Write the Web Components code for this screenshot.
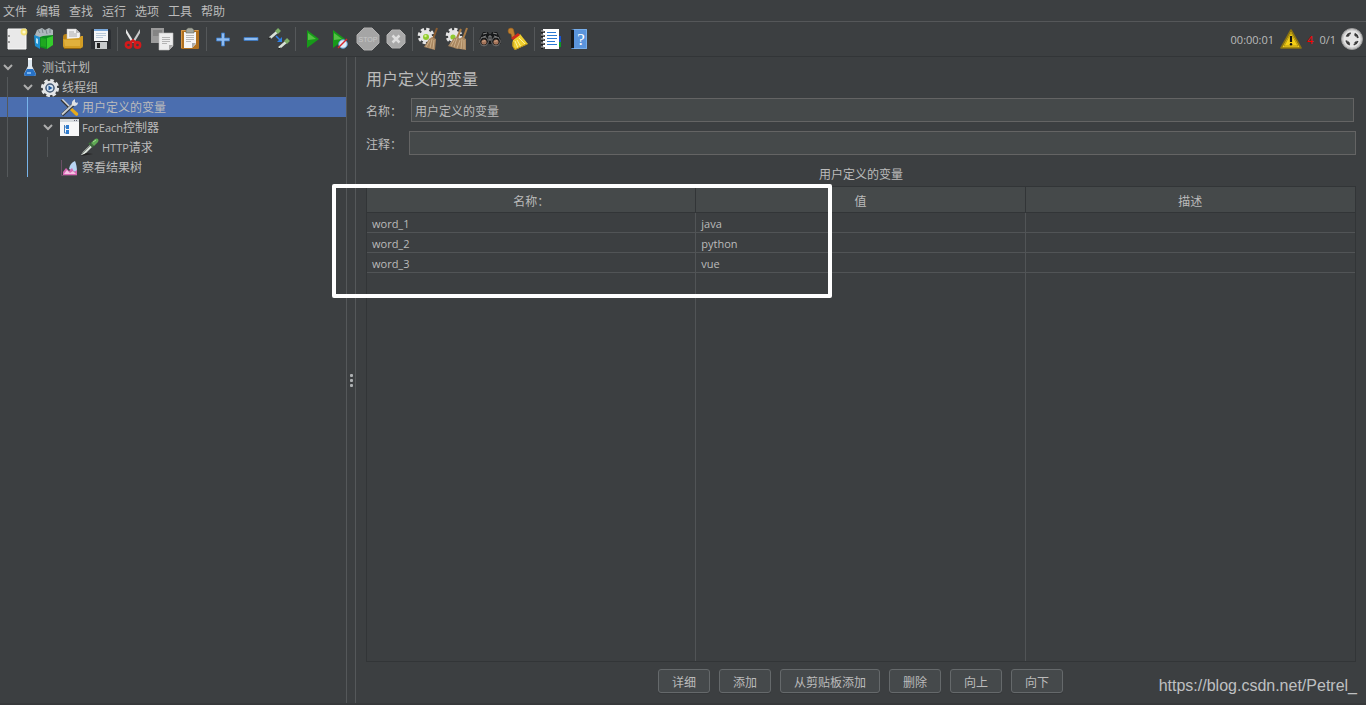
<!DOCTYPE html>
<html lang="zh-CN">
<head>
<meta charset="utf-8">
<title>Apache JMeter</title>
<style>
:root{
  --bg:#3c3f41; --field:#45494a; --text:#bbbbbb; --edge:#646464; --line:#515456; --dark:#323537; --sel:#4b6eaf;
}
body{margin:0;background:var(--bg);color:var(--text);font:12px/16px "Open Sans","Noto Sans CJK SC",sans-serif}
</style>
</head>
<body>
<jm-app></jm-app>

<script>
const ICONS = {
new:`<path d="M3 2h18v20H3z" fill="#e9e9e9" stroke="#fafafa"/><path d="M4 8v2M4 14v2" stroke="#999" stroke-width="2"/><circle cx="19" cy="5" r="3.4" fill="#f5df62" opacity=".85"/><circle cx="19" cy="5" r="1.6" fill="#fffbd0"/>`,
templates:`<path d="M2 8l2-5 5-2 3 2 4-2 4 2v9H4z" fill="#aeb7bb"/><path d="M5 3l2 3M9 2l1 4M13 3l1 4M17 2v4" stroke="#7b868a"/><path d="M1 8l6 2v12l-5-3z" fill="#1d8fcf"/><path d="M3 11l2 1v5l-2-1z" fill="#b5e2f8"/><path d="M7 10l3-1 10-1 0 10-7 4-6-2z" fill="#0c8a1c"/><path d="M7 10l7 1v11l-7-2z" fill="#139020"/><path d="M8 11l5 1v8l-5-1z" fill="#1fa81f"/><path d="M14 11l6-2v9l-6 4z" fill="#35cc2c"/>`,
open:`<path d="M2 10q0-3 3-3h3v5H2z" fill="#b98215"/><path d="M6 2h9l4 4v9H6z" fill="#f1f1f1" stroke="#bbb" stroke-width=".5"/><path d="M15 2v4h4" fill="#bbb"/><path d="M8 5h5M8 7h8M8 9h8" stroke="#aaa"/><path d="M3 12l15-1 2-2h2v10q0 2-2 2H4q-2 0-2-2v-7z" fill="#d39d24"/><path d="M3 13h16v6H4z" fill="#efc75c" opacity=".45"/><path d="M3 21.500h17" stroke="#8f620f"/>`,
save:`<path d="M3 2h18l1 2v18H2V3z" fill="#2c2f33"/><path d="M5 2h14v12H5z" fill="#f4f6f8"/><path d="M5 2h14v2H5z" fill="#7aa8da"/><path d="M7 6.500h10M7 8.500h10M7 10.500h7" stroke="#b9cada"/><path d="M6 15h12v7H6z" fill="#c7cacc"/><path d="M8 16h3v5H8z" fill="#222"/>`,
cut:`<path d="M4 2l8 13-2 1L4 6z" fill="#e7e7e7"/><path d="M18 2l-8 13 2 1 6-10z" fill="#c9c9c9"/><g fill="none" stroke="#d3191b" stroke-width="2.600"><ellipse cx="6.500" cy="18" rx="2.600" ry="2.600"/><ellipse cx="15.500" cy="18" rx="2.600" ry="2.600"/><path d="M8 16l3-2.500 3 2.500"/></g>`,
copy:`<path d="M1 1h13v15H1z" fill="#9b9b9b"/><path d="M3 4h9M3 6h9M3 8h6" stroke="#6e6e6e"/><path d="M9 6h14v13l-4 4H9z" fill="#ededed" stroke="#bdbdbd" stroke-width=".6"/><path d="M23 18h-4v5z" fill="#a9a9a9"/><path d="M12 10.500h8M12 12.500h8M12 14.500h8M12 16.500h5" stroke="#b4b4b4"/>`,
paste:`<rect x="3" y="3" width="18" height="19" rx="1" fill="#b1701d"/><path d="M3.500 21V3.500H20.500" fill="none" stroke="#d7994a"/><path d="M6 5h12v12l-4 4H6z" fill="#f5f5f5"/><path d="M18 16h-4v5z" fill="#aaa"/><path d="M8 8.500h8M8 10.500h8M8 12.500h8M8 14.500h5" stroke="#b8b8b8"/><path d="M8 3l2-2h4l2 2v3H8z" fill="#a3a69c" stroke="#62655d" stroke-width=".6"/>`,
plus:`<path d="M10.500 6h3v5h5v3h-5v5h-3v-5h-5v-3h5z" fill="#8fbcf0" stroke="#3a78c4" stroke-width=".8"/>`,
minus:`<path d="M5 10.500h14v3H5z" fill="#8fbcf0" stroke="#3a78c4" stroke-width=".8"/>`,
toggle:`<path d="M3 11l7-6" stroke="#d9e2d9" stroke-width="2.600"/><path d="M9.500 5.500l3-3" stroke="#7db067" stroke-width="4"/><path d="M12 21l7-6" stroke="#d9e2d9" stroke-width="2.600"/><path d="M18.500 15.500l3-3" stroke="#7db067" stroke-width="4"/><path d="M9 9l4 4" stroke="#2f7fe6" stroke-width="1.600"/><path d="M15 10v5h-5z" fill="#2f7fe6"/><path d="M1 12l3-1M11 22l3-1" stroke="#222"/>`,
play:`<path d="M7 3l12 9-12 9z" fill="#179a19"/><path d="M8 6l8 6-8 1z" fill="#54c044"/>`,
playno:`<path d="M5 3l12 9-12 9z" fill="#179a19"/><path d="M6 6l8 6-8 1z" fill="#54c044"/><circle cx="15" cy="17" r="4.300" fill="#dcecf8" stroke="#5c9acb"/><path d="M10 21l9-9" stroke="#d6262b" stroke-width="1.500"/>`,
stop:`<path d="M8 1h8l7 7v8l-7 7H8l-7-7V8z" fill="#a5a5a5" stroke="#b0b0b0"/><text x="12" y="15" text-anchor="middle" font-family="Liberation Sans" font-size="7" fill="#c8c8c8">STOP</text>`,
shutdown:`<path d="M8 3h8l5 5v8l-5 5H8l-5-5V8z" fill="#a9a9a9" stroke="#b3b3b3"/><path d="M8.500 8.500l7 7M15.500 8.500l-7 7" stroke="#dedede" stroke-width="2.500"/>`,
clear:`<circle cx="9" cy="9" r="6" fill="#e6e6e6"/><circle cx="9" cy="9" r="6.800" fill="none" stroke="#e6e6e6" stroke-width="3" stroke-dasharray="3.200 2.140"/><circle cx="9" cy="10" r="3" fill="#8fca2e"/><circle cx="8.500" cy="9" r="1.200" fill="#d4f08a"/><path d="M20 1l-4 11" stroke="#8b5d31" stroke-width="2"/><path d="M12 12l3-2 4 2-1 11-11-3z" fill="#a88660"/><path d="M13 13l-4 7M15 12l-2 9M17 13l-1 9" stroke="#cdb08a"/>`,
clearall:`<circle cx="9" cy="9" r="6" fill="#e6e6e6"/><circle cx="9" cy="9" r="6.800" fill="none" stroke="#e6e6e6" stroke-width="3" stroke-dasharray="3.200 2.140"/><circle cx="8" cy="10" r="2.600" fill="#8fca2e"/><path d="M16 2l-4 9M22 1l-4 11" stroke="#a87a45" stroke-width="2"/><path d="M9 11l4-1 2 2-2 10-10-3z" fill="#a88660"/><path d="M14 12l3-2 4 2v11l-12-2z" fill="#ab8962"/><path d="M10 12l-4 7M12 11l-3 9M15 13l-3 8M17 12l-1 10M19 13v9" stroke="#cdb08a"/>`,
search:`<path d="M5 5l5 0 1 2h2l1-2 5 0 4 8v4H1v-4z" fill="#17191a"/><path d="M5 7l4-1M19 7l-4-1M3 11l5-2M21 11l-5-2M11 9h2v4h-2z" fill="none" stroke="#8b8b8b"/><circle cx="6" cy="14.500" r="4.300" fill="#17191a" stroke="#777"/><circle cx="18" cy="14.500" r="4.300" fill="#17191a" stroke="#777"/><circle cx="6" cy="15" r="2.600" fill="#a3745a"/><circle cx="18" cy="15" r="2.600" fill="#a3745a"/><path d="M4.500 15q1-2 3-1M16.500 15q1-2 3-1" fill="none" stroke="#dcae8e"/>`,
broom:`<path d="M2 4q0-3 3-3t3 4l1 4-3 2-1-4q-3 0-3-3z" fill="#c08132" stroke="#8f5b1c" stroke-width=".6"/><path d="M7 13q-2 6 2 10l13-6-8-10z" fill="#efcf2f"/><path d="M5 11l7-5 2 2-7 5z" fill="#cf2b1c"/><path d="M9 14l3 7M11 13l4 7M13 11l6 6" stroke="#fff19a"/><path d="M7 15q-1 5 2 7.500l12-5.500" fill="none" stroke="#b88e13"/>`,
list:`<path d="M18 9h4v6h-4z" fill="#1753cf"/><path d="M18 15h4v5h-4z" fill="#0b9a27"/><path d="M4 2h16v20H4z" fill="#fff"/><path d="M8 5.500h9M8 8.500h10M8 11.500h10M8 14.500h8M8 17.500h10" stroke="#2a78d2"/><path d="M2 5h4M2 9h4M2 13h4M2 17h4M2 21h4" stroke="#111" stroke-width="1.500"/><path d="M2 4h3M2 8h3M2 12h3M2 16h3M2 20h3" stroke="#bbb"/>`,
help:`<path d="M4 3l3-1h13v20H5l-1-1z" fill="#5a94dc"/><path d="M4 3h3v18H4z" fill="#17191b"/><path d="M7 2.500h12.500v19H7" fill="none" stroke="#78aeea"/><text x="14" y="18" text-anchor="middle" font-family="Liberation Serif" font-size="17" fill="#fff">?</text>`,
warn:`<path d="M12 3L22 21H2z" fill="#f5cf16" stroke="#8c7411" stroke-width="1.600" stroke-linejoin="round"/><path d="M12 6L19 19H5z" fill="none" stroke="#8c7411" stroke-width=".6"/><path d="M12 9v6" stroke="#111" stroke-width="2.200"/><circle cx="12" cy="17.300" r="1.200" fill="#111"/>`,
threads:`<circle cx="12" cy="12" r="10.500" fill="#c9c9c9" stroke="#9a9a9a"/><circle cx="12" cy="12" r="8.500" fill="#e6e6e6"/><circle cx="12" cy="12" r="6" fill="none" stroke="#3a3a3a" stroke-width="1.800" stroke-dasharray="5.400 4.025" stroke-dashoffset="-2"/><path d="M7 7l3 1-2 2zM17 7l-1 3-2-2zM17 17l-3-1 2-2zM7 17l1-3 2 2z" fill="#3a3a3a"/>`,
flask:`<path d="M8 2h4v7l4 8q0 2-2 2H6q-2 0-2-2l4-8z" fill="#dfe9f1"/><path d="M7 12h6l3 5q0 2-2 2H6q-2 0-2-2z" fill="#2872c6"/><path d="M7 15h4v2H7z" fill="#7cb5ee"/><path d="M8 2h4" stroke="#fff" stroke-width="2"/>`,
gear:`<circle cx="10" cy="11" r="5.800" fill="none" stroke="#e4e6e8" stroke-width="3"/><circle cx="10" cy="11" r="7.600" fill="none" stroke="#e4e6e8" stroke-width="3" stroke-dasharray="3.500 2.469"/><circle cx="10" cy="11" r="4" fill="#d7e5f3" stroke="#4a5f7a" stroke-width="1.500"/><path d="M8.500 8.500l4 2.500-4 2.500z" fill="#245c9e"/>`,
tools:`<path d="M1 3l2-1 8 8-1 2z" fill="#d5d5d5"/><path d="M1 3l8 8" stroke="#333" stroke-width="1.200"/><path d="M11 10l7 6q1 2-1 3-1 0-2-1l-6-6z" fill="#e6ab1c"/><path d="M2 18L14 7" stroke="#303438" stroke-width="3.400"/><path d="M2 17.500L14 6.500" stroke="#c8ccd0" stroke-width="2"/><path d="M12 8q-1-4 3-6v3l2 1 1-1q0 4-4 4z" fill="#dfe2e5"/>`,
foreach:`<path d="M0 2h19v17H0z" fill="#f6f7f8"/><path d="M0 2h19v3H0z" fill="#d5dade"/><path d="M14 3.500h1M16 3.500h1" stroke="#667"/><path d="M4.500 8v8h3M4.500 10h3" fill="none" stroke="#4a7fb8"/><path d="M6 8h3v4H6zM6 13h3v4H6z" fill="#2f7dd0"/>`,
pipette:`<path d="M1 18l2-3 8-8 2 2-8 8z" fill="#dce3dc"/><path d="M2 17l9-9" stroke="#8c948c"/><path d="M1 19l12-2-7-1z" fill="#222"/><path d="M9 6l4 4" stroke="#386a36" stroke-width="2"/><path d="M11 6l4-4q2-1 3 0t0 3l-4 4z" fill="#5faa54"/><path d="M13 5l3-2" stroke="#a4dc92"/>`,
result:`<path d="M1.500 3v15.500H17" fill="none" stroke="#6a5064"/><path d="M9 12q1-6 6-8 2 4 2 12z" fill="#b9d5f4"/><path d="M3 18v-3l3-4 3 3 3-3 2 4 3-2v5z" fill="#d667b3"/><path d="M4 17l3-4 3 3 3-2 3 3z" fill="#f5c3e3"/>`
};
const CONTROL_RESET = 'box-sizing:border-box;margin:0;font:inherit;color:inherit;';

class JmElement extends HTMLElement {
  connectedCallback(){
    if(this.shadowRoot) return;
    const t=document.createElement('template');
    t.innerHTML=this.render();
    this.attachShadow({mode:'open'}).append(t.content.cloneNode(true));
  }
}

class JmIcon extends JmElement {
  render(){
    const size=this.getAttribute('size')||'24';
    return `<style>:host{display:block;flex:none}svg{display:block}</style>
    <svg width="${size}" height="${size}" viewBox="0 0 ${size} ${size}" fill="none" aria-hidden="true">${ICONS[this.getAttribute('name')]}</svg>`;
  }
}

class JmMenubar extends JmElement {
  render(){
    return `<style>
    :host{display:block;border-bottom:1px solid #555759}
    nav{display:flex;gap:9px;padding:0 3px}
    button{${CONTROL_RESET}border:0;background:none;padding:4px 0 1px;white-space:nowrap}
    </style><nav>${['文件','编辑','查找','运行','选项','工具','帮助'].map(x=>`<button type="button">${x}</button>`).join('')}</nav>`;
  }
}

class JmToolbar extends JmElement {
  render(){
    const groups=[
      [['new','新建'],['templates','模板'],['open','打开'],['save','保存']],
      [['cut','剪切'],['copy','复制'],['paste','粘贴']],
      [['plus','展开'],['minus','收起'],['toggle','切换']],
      [['play','启动'],['playno','不停顿启动'],['stop','停止'],['shutdown','关闭']],
      [['clear','清除'],['clearall','清除全部']],
      [['search','搜索'],['broom','重置搜索']],
      [['list','函数助手'],['help','帮助']]
    ];
    const g=groups.map(a=>a.map(([n,l])=>`<button type="button" aria-label="${l}" ${n==='stop'||n==='shutdown'?'disabled':''}><jm-icon name="${n}"></jm-icon></button>`).join('')).join('<i></i>');
    return `<style>
    :host{display:flex;align-items:center;height:34px;padding:0 2px 0 3px;border-bottom:1px solid var(--dark)}
    button{margin:0;border:0;background:none;padding:2px}
    i{width:1px;height:24px;margin:0 2px;background:#55585a}
    .status{display:flex;align-items:center;margin-left:auto;font-size:11px}
    .status span{padding-top:1px}
    .status .warn{padding:0 4px 0 5px}
    .status .errors{padding-right:6px;color:#f00}
    .status .threads{padding-right:4px}
    </style>${g}<div class="status"><span>00:00:01</span>
    <button type="button" class="warn" aria-label="警告"><jm-icon name="warn"></jm-icon></button><span class="errors">4</span>
    <span class="threads">0/1</span><jm-icon name="threads"></jm-icon></div>`;
  }
}

class JmTreeItem extends JmElement {
  render(){
    const d=+this.getAttribute('depth');
    const cells=Array.from({length:d},(_,i)=>`<i class="${i===1?'active':''}"></i>`).join('');
    const arrow=this.hasAttribute('open')?'<svg width="16" height="20" viewBox="0 0 16 20" aria-hidden="true"><path d="M4 8l4 4 4-4" fill="none" stroke="#adadad" stroke-width="2"/></svg>':'';
    return `<style>
    :host{display:flex;height:20px;line-height:20px;white-space:nowrap}
    :host([selected]){background:var(--sel)}
    i{width:20px;background:linear-gradient(#55595b,#55595b) 7px 0/1px 100% no-repeat}
    i.active{background-image:linear-gradient(#78b4ea,#78b4ea)}
    .arrow{width:20px}
    svg{display:block}
    .label{padding:2px 0 0 2px;line-height:18px}
    ::slotted(span){font-size:11px}
    </style>${cells}<span class="arrow">${arrow}</span><jm-icon size="20" name="${this.getAttribute('icon')}"></jm-icon><span class="label"><slot></slot></span>`;
  }
}

class JmTree extends JmElement {
  render(){
    return `<style>:host{display:block;overflow:hidden}</style>
    <div role="tree" aria-label="测试计划">
    <jm-tree-item role="treeitem" depth="0" icon="flask" open>测试计划</jm-tree-item>
    <jm-tree-item role="treeitem" depth="1" icon="gear" open>线程组</jm-tree-item>
    <jm-tree-item role="treeitem" depth="2" icon="tools" selected aria-selected="true">用户定义的变量</jm-tree-item>
    <jm-tree-item role="treeitem" depth="2" icon="foreach" open><span>ForEach</span>控制器</jm-tree-item>
    <jm-tree-item role="treeitem" depth="3" icon="pipette"><span>HTTP</span>请求</jm-tree-item>
    <jm-tree-item role="treeitem" depth="2" icon="result">察看结果树</jm-tree-item>
    </div>`;
  }
}

class JmSplitter extends JmElement {
  render(){
    return `<style>
    :host{box-sizing:border-box;display:flex;flex-direction:column;justify-content:center;align-items:center;gap:2px;width:10px;border:solid #55585a;border-width:0 1px}
    i{width:3px;height:3px;background:#adb0b2;border-radius:1px}
    </style><i></i><i></i><i></i>`;
  }
}

class JmField extends JmElement {
  render(){
    return `<style>
    :host{display:flex;align-items:center}
    label{flex:none;width:var(--label-width,43px);padding-top:3px}
    input{${CONTROL_RESET}flex:1;min-width:0;height:24px;padding:1px 3px 0;border:1px solid var(--edge);background:var(--field);outline:0}
    </style><label for="field">${this.getAttribute('label')}</label><input id="field" type="text" value="${this.getAttribute('value')||''}">`;
  }
}

class JmTable extends JmElement {
  render(){
    const rows=[['word_1','java'],['word_2','python'],['word_3','vue']];
    return `<style>
    :host{display:flex;flex-direction:column;position:relative}
    table{flex:1;width:100%;height:100%;table-layout:fixed;border-collapse:separate;border-spacing:0;box-sizing:border-box;border:1px solid var(--dark)}
    th,td{box-sizing:border-box;border-right:1px solid var(--line);font-weight:400}
    th{height:26px;padding:5px 0 0;background:var(--field);border-right-color:var(--dark);border-bottom:1px solid var(--dark)}
    td{height:20px;padding:2px 5px 0;border-bottom:1px solid var(--line);font-size:11px}
    th:last-child,td:last-child{border-right:0}
    .rest td{height:auto;border-bottom:0}
    ::slotted(*){position:absolute}
    </style><table aria-label="用户定义的变量">
    <thead><tr><th scope="col">名称：</th><th scope="col">值</th><th scope="col">描述</th></tr></thead>
    <tbody>${rows.map(r=>`<tr><td>${r[0]}</td><td>${r[1]}</td><td></td></tr>`).join('')}
    <tr class="rest" aria-hidden="true"><td></td><td></td><td></td></tr></tbody></table><slot></slot>`;
  }
}

/* White frame laid over the table to point out its first rows. */
class JmHighlight extends JmElement {
  render(){
    return `<style>:host{box-sizing:border-box;left:-34px;top:-2px;width:500px;height:114px;border:4px solid #fff;border-radius:2px;pointer-events:none}</style>`;
  }
}

class JmButton extends JmElement {
  render(){
    return `<style>:host{display:block}
    button{${CONTROL_RESET}display:block;height:24px;padding:3px 13px 0;border:1px solid #65696b;border-radius:3px;background:#45494b;white-space:nowrap;box-shadow:0 1px #36393b}
    </style><button type="button"><slot></slot></button>`;
  }
}

class JmEditor extends JmElement {
  render(){
    return `<style>
    :host{display:flex;flex-direction:column;padding:10px 10px 10px;min-width:0}
    h1{margin:0 0 7px;font-size:16px;line-height:24px;font-weight:400}
    .name{margin:0 2px 9px 0;--label-width:45px}
    h2{margin:12px 0 3px;font-size:12px;line-height:16px;font-weight:400;text-align:center}
    jm-table{flex:1}
    .actions{display:flex;justify-content:center;gap:9px;margin-top:7px;padding-right:1px}
    a{position:absolute;right:9px;bottom:7px;color:#bfc0c1;font:16px/20px "Liberation Sans",sans-serif;text-decoration:none}
    </style>
    <h1>用户定义的变量</h1>
    <jm-field class="name" label="名称：" value="用户定义的变量"></jm-field>
    <jm-field label="注释："></jm-field>
    <h2>用户定义的变量</h2>
    <jm-table><jm-highlight></jm-highlight></jm-table>
    <div class="actions">${['详细','添加','从剪贴板添加','删除','向上','向下'].map(x=>`<jm-button>${x}</jm-button>`).join('')}</div>
    <a href="https://blog.csdn.net/Petrel_">https://blog.csdn.net/Petrel_</a>`;
  }
}

class JmApp extends JmElement {
  render(){
    return `<style>
    :host{box-sizing:border-box;display:flex;flex-direction:column;min-height:100vh;position:relative;border-bottom:2px solid #37393b}
    main{flex:1;display:flex}
    jm-tree{flex:0 0 346px}
    jm-splitter{flex:none}
    jm-editor{flex:1}
    </style><jm-menubar></jm-menubar><jm-toolbar></jm-toolbar>
    <main><jm-tree></jm-tree><jm-splitter></jm-splitter><jm-editor></jm-editor></main>`;
  }
}

for(const [n,c] of [['jm-icon',JmIcon],['jm-menubar',JmMenubar],['jm-toolbar',JmToolbar],['jm-tree-item',JmTreeItem],['jm-tree',JmTree],['jm-splitter',JmSplitter],['jm-field',JmField],['jm-table',JmTable],['jm-highlight',JmHighlight],['jm-button',JmButton],['jm-editor',JmEditor],['jm-app',JmApp]]) customElements.define(n,c);
</script>
</body>
</html>
